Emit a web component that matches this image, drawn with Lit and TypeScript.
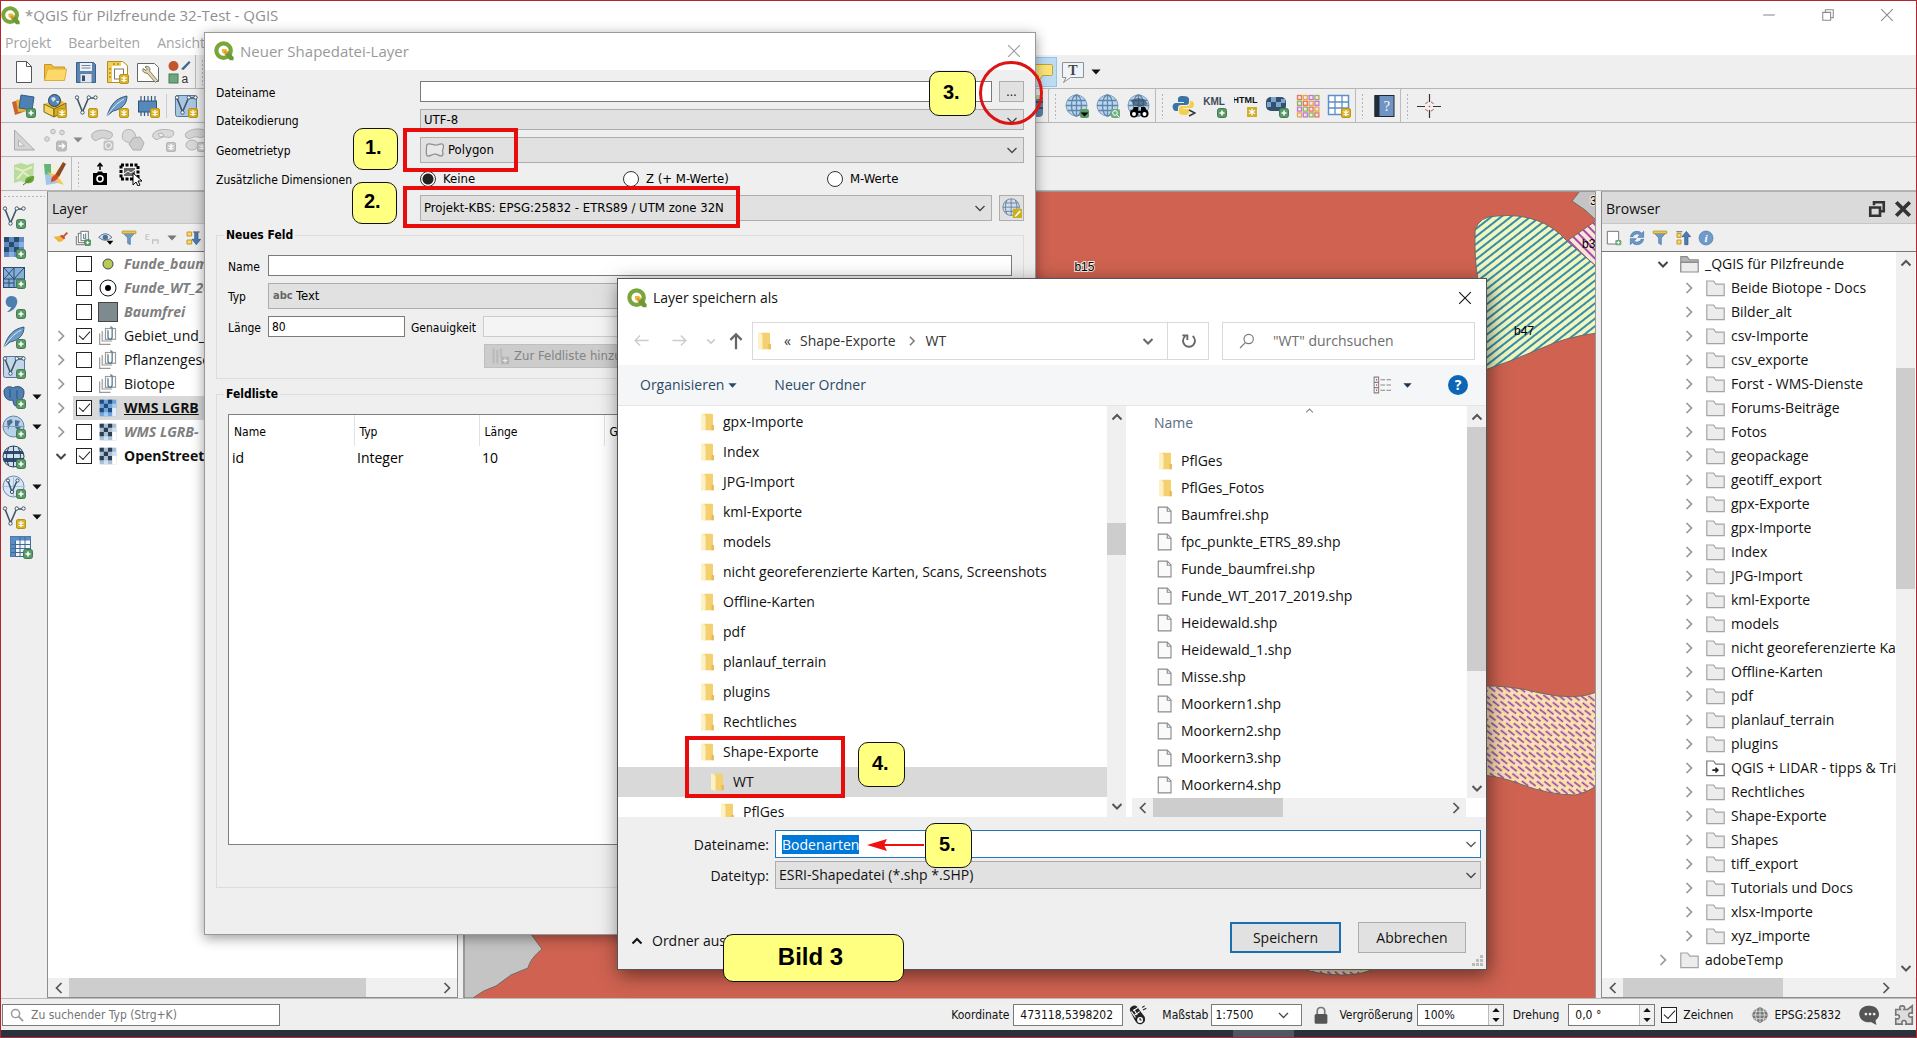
import { LitElement, html, svg, css, nothing, type TemplateResult } from "lit";
import { customElement } from "lit/decorators.js";
import { classMap } from "lit/directives/class-map.js";

/* ---------- icon library ---------- */

const plus = svg`<rect x="14.5" y="14.5" width="9" height="9" rx="2" fill="#5b9a68" stroke="#3f7d4e"/><path d="M19 16.5v5M16.5 19h5" stroke="#fff" stroke-width="1.6"/>`;
const star = svg`<rect x="14.5" y="14.5" width="9" height="9" rx="1.5" fill="#d8b328" stroke="#b99518"/><path d="M19 16v6M16.4 17.5l5.2 3M21.6 17.5l-5.2 3" stroke="#fff" stroke-width="1.3"/>`;
const grayStar = svg`<rect x="14.5" y="14.5" width="9" height="9" rx="1.5" fill="#c6c6c6" stroke="#b5b5b5"/><path d="M19 16v6M16.4 17.5l5.2 3M21.6 17.5l-5.2 3" stroke="#fff" stroke-width="1.3"/>`;
const vee = svg`<path d="M3 4l5.500 14 6-14h6" fill="none" stroke="#3d5566" stroke-width="1.6"/><g fill="#fff" stroke="#3d5566"><circle cx="3" cy="3.500" r="1.700"/><circle cx="8.500" cy="18.500" r="1.700"/><circle cx="14.800" cy="3.500" r="1.700"/><circle cx="21.500" cy="3.500" r="1.700"/></g>`;
const globe = svg`<circle cx="11.500" cy="11.500" r="10.500" fill="#bcd6ee" stroke="#7f9fbd"/><g fill="none" stroke="#5f86ad" stroke-width="1.300"><ellipse cx="11.500" cy="11.500" rx="5" ry="10.500"/><path d="M11.500 1v21M1 11.500h21M2.500 6.500h18M2.500 16.500h18"/></g>`;
const feather = svg`<path d="M2 22C6 10 11 4 22 2c0 7-4 13-14 15z" fill="#6d9cc8" stroke="#35597c"/><path d="M2 22C7 14 12 9 19 5" fill="none" stroke="#dbe8f4"/>`;
const chess = (a: string, b: string, c: string) => svg`<rect x="2" y="2" width="20" height="20" fill="${a}"/><path d="M2 2h5v5h-5zM12 2h5v5h-5zM7 7h5v5h-5zM2 12h5v5h-5zM12 12h5v5h-5z" fill="${b}"/><path d="M17 7h5v5h-5zM7 17h5v5h-5z" fill="${c}"/>`;

const ICONS: Record<string, TemplateResult | unknown> = {
  logo: svg`<circle cx="11.500" cy="11.500" r="8.700" fill="none" stroke="#78a63c" stroke-width="5"/><path d="M12 12h5.500l6 7.500v3.500h-4.500l-7-8z" fill="#6b9a35"/><path d="M9.500 9.500h5l3 3.500-3 2.500-2 .5-3-2.500z" fill="#eeb63a"/><path d="M12.500 12.500l3 3" stroke="#e8772e" stroke-width="1.500"/>`,
  file: svg`<path d="M4.500 1.500h10l5 5v16h-15z" fill="#fff" stroke="#555"/><path d="M14.500 1.500v5h5" fill="none" stroke="#555"/>`,
  open: svg`<path d="M1.500 20V4.500h7l2 2.500h11v13z" fill="#f0bc3e" stroke="#c69324"/><path d="M1.500 20.500l3-11.500h19l-2 11.500z" fill="#ffd968" stroke="#dcae3c"/>`,
  save: svg`<path d="M2.500 2.500h17l2 2v18h-19z" fill="#5b84b1" stroke="#3b5f88"/><rect x="6" y="3" width="12" height="8" fill="#eef2f6"/><path d="M7.500 5.500h9M7.500 8h9" stroke="#6a86a5"/><rect x="6.500" y="14" width="11" height="8.500" fill="#e4e8ec"/><rect x="8" y="15.500" width="3" height="5.500" fill="#35506e"/>`,
  layout: svg`<path d="M2.500 1.500h15l5 4v17h-20z" fill="#fff" stroke="#b48b1e"/><path d="M3 2h13v4h-9v16h-4z" fill="#f1cf58"/><rect x="9.500" y="9" width="9" height="10" fill="#fff" stroke="#777"/><path d="M4 9h2M4 13h2M4 17h2M9 3v2M13 3v2" stroke="#8a6b18"/>${star}`,
  tools: svg`<path d="M1.500 3.500h17l4 4v14h-21z" fill="#fff" stroke="#666"/><path d="M9 7c3-2 6 1 4.500 4l8 9.500-2 2-8.500-9.500c-3 .5-5-2-4-4.500l3 2 1.500-1.500z" fill="#e6d9a0" stroke="#777"/>`,
  style: svg`<circle cx="6.500" cy="6" r="5" fill="#c1562d"/><path d="M14 9l8-8 1.500 1.500-7 7.500z" fill="#41648a"/><rect x="2" y="14" width="9" height="9" fill="#6fa67e" stroke="#477a55"/><text x="14.500" y="22.500" font-size="12" font-family="Liberation Sans" fill="#333">a</text>`,
  dsm: svg`<path d="M0 8l11-3 3 12-11 4z" fill="#c8632e"/><path d="M4 6l12-2 1 13-11 1z" fill="#eab43a"/><path d="M9 1l13 2-2 13-13-2z" fill="#4f80b3" stroke="#345c87"/>${plus}`,
  gpkg: svg`<path d="M1 10l10 5 11-6-6-4z" fill="#e8bb35"/><path d="M1 10l10 5v8l-10-5z" fill="#f4d35e" stroke="#7c6418"/><path d="M11 15l12-6v8l-12 6z" fill="#dba926" stroke="#7c6418"/><circle cx="11.500" cy="6.500" r="6" fill="#5383b4" stroke="#27425f"/><path d="M8 4l3-1 2 2-3 3zM13 7l3 0-1 3z" fill="#d6e5f3"/>${star}`,
  shp: svg`${vee}${star}`,
  vec: svg`${vee}${plus}`,
  spat: svg`${feather}${star}`,
  spatp: svg`${feather}${plus}`,
  mem: svg`<rect x="2.500" y="7" width="18" height="11" fill="#5788bb" stroke="#2f5379"/><path d="M5 2v5M8.500 2v5M12 2v5M15.500 2v5M19 2v5M5 18v4M8.500 18v4M12 18v4" stroke="#365a80" stroke-width="1.200"/>${star}`,
  virt: svg`<rect x="1.500" y="1.500" width="21" height="21" rx="2" fill="#a9c5e2" stroke="#55789c"/>${vee}${star}`,
  virtp: svg`<rect x="1.500" y="1.500" width="21" height="21" rx="2" fill="#c3d7ea" stroke="#55789c"/>${vee}${plus}`,
  ruler: svg`<path d="M2.500 2v20h20z" fill="#d4d4d4" stroke="#a9a9a9"/><path d="M6.500 12v6h6z" fill="#efefef" stroke="#b4b4b4"/>`,
  g1: svg`<g fill="#dcdcdc" stroke="#b5b5b5"><circle cx="4" cy="11" r="2.300"/><circle cx="10" cy="3.500" r="2.300"/><circle cx="19" cy="4.500" r="2.300"/><rect x="13.500" y="13" width="10" height="10" rx="2" fill="#bdbdbd"/></g><path d="M15.500 18h6m-2.500-2.500l2.500 2.500-2.500 2.500" stroke="#fff" stroke-width="1.400" fill="none"/>`,
  g2: svg`<path d="M2 6c5-6 17-4 20-1 2 4-3 8-8 5-4-1-7 4-10 2-2-1-3-4-2-6z" fill="#d4d4d4" stroke="#b2b2b2"/><rect x="13.500" y="12.500" width="10" height="10" rx="2" fill="#c2c2c2"/><circle cx="18.500" cy="17.500" r="3" fill="none" stroke="#fff"/>`,
  g3: svg`<path d="M2 5c1-4 8-5 11-1 2 3 1 5 4 7l-4 6c-4 0-4-3-7-3-4-1-6-5-4-9z" fill="#d9d9d9" stroke="#b2b2b2"/><path d="M12 10l7-1 4 6-3 7-8 0-4-6z" fill="#cdcdcd" stroke="#adadad"/>`,
  g4: svg`<path d="M1 6c4-6 15-5 20-3 3 4-3 8-7 6-5-1-8 4-11 2-2-1-3-3-2-5z" fill="#dadada" stroke="#b2b2b2"/><path d="M6 6l4-1 2 3-4 1z" fill="#efefef" stroke="#b2b2b2"/>${grayStar}`,
  g5: svg`<path d="M3 5c5-5 16-5 20-2 1 4-3 8-8 6-5-1-8 3-11 1-2-1-2-3-1-5z" fill="#d4d4d4" stroke="#b2b2b2"/><ellipse cx="9" cy="17" rx="6" ry="5" fill="#d8d8d8" stroke="#b2b2b2"/>${grayStar}`,
  osm1: svg`<path d="M2 3l7-2 6 2 7-2-1 18-6 3-6-3-7 2z" fill="#b9dc9c"/><path d="M3 6l8 3 9-4M5 17l6-7 8 6" stroke="#e4efc5" stroke-width="2" fill="none"/><path d="M13 20c0-5 4-6 9-6 1 6-4 9-9 6z" fill="#6aa335"/><path d="M11 23l8-6" stroke="#4c7d22"/>`,
  osm2: svg`<path d="M1 2l7 0 6 2-2 8-10 2z" fill="#5fb877"/><path d="M8 1l8 3 5 16-6 3-7-8z" fill="#f6eedc"/><path d="M2 12l9 1 4 8-12 2z" fill="#9ec7e8"/><path d="M4 10l10 3 7 10-6-2z" fill="#f1c85c"/><path d="M20 0l3 2-7 13-4-2z" fill="#8a4a22"/><path d="M8 20c0-5 3-8 6-7 3 2 0 6-6 7z" fill="#d8482a"/>`,
  cam: svg`<path d="M12 8V2M9.500 4.500L12 1.500l2.500 3" stroke="#000" stroke-width="1.500" fill="none"/><path d="M5 11h4l1-1.500h4l1 1.500h4v12h-14z" fill="#000"/><circle cx="12" cy="16.800" r="3.800" fill="#fff"/><circle cx="12" cy="16.800" r="2.200" fill="#000"/>`,
  shot: svg`<rect x="2" y="3" width="17" height="14" fill="none" stroke="#000" stroke-width="3" stroke-dasharray="3 1.500"/><rect x="5" y="6" width="11" height="8" fill="#666"/><path d="M5 12l4-3 3 2 4-3" stroke="#fff" fill="none"/><path d="M14 11v12l3-3 2 4 2-1-2-4h4z" fill="#fff" stroke="#000"/>`,
  note: svg`<path d="M2.500 4.500h19q1 0 1 1v9q0 1-1 1h-9l-4 6v-6h-6z" fill="#fbe57a" stroke="#c2a42e"/>`,
  noteT: svg`<path d="M1.500 2.500h21v15h-13l-7 5 2.500-5h-3.500z" fill="#eef4fa" stroke="#8a9299"/><text x="12" y="14.500" text-anchor="middle" font-size="14" font-weight="700" font-family="Liberation Serif" fill="#444">T</text>`,
  db: svg`<path d="M8 3h15v17q0 2-3 3h-12z" fill="#5d7f9f"/><path d="M8 8h15M8 14h15" stroke="#33506c" stroke-width="2"/><path d="M8 1h14v4h-14z" fill="#b5d69a"/>`,
  gdown: svg`${globe}<rect x="15" y="15" width="9" height="9" rx="2" fill="#5b9a68"/><path d="M15.500 18.500h8l-4 4z" fill="#000"/>`,
  gfind: svg`${globe}<rect x="15" y="15" width="9" height="9" rx="2" fill="#6fae7c"/><circle cx="19" cy="19" r="2.300" fill="none" stroke="#fff"/><path d="M21 21l2 2" stroke="#fff"/>`,
  gbin: svg`${globe}<path d="M4 6l7-2 6 1 4 5-8 3-7-2z" fill="#2f4a63" opacity=".7"/><circle cx="7" cy="19.500" r="4" fill="#000"/><circle cx="17.500" cy="19.500" r="4" fill="#000"/><path d="M7 13h4v4h3v-4h4l3 6h-17z" fill="#000"/><circle cx="7" cy="20" r="2" fill="#fff"/><circle cx="17.500" cy="20" r="2" fill="#fff"/>`,
  python: svg`<path d="M11 2c-5 0-5 2-5 4v2h6v1h-8c-5 0-4 8 0 8h2v-3c0-2 1-3 3-3h5c2 0 3-1 3-3v-3c0-2-2-3-6-3z" fill="#3b74a4"/><path d="M12 21c5 0 5-2 5-4v-2h-6v-1h8c4 0 4-7 0-7h-1v2c0 2-1 3-3 3h-5c-2 0-3 1-3 3v3c0 2 2 3 5 3z" fill="#f3cf4a"/><path d="M17 16l6 3-6 3" fill="none" stroke="#333" stroke-width="1.500"/>`,
  kml: svg`<text x="11" y="11" text-anchor="middle" font-size="10" font-weight="700" font-family="Liberation Sans" fill="#3c4a57">KML</text>${plus}`,
  htm: svg`<text x="11" y="9" text-anchor="middle" font-size="9" font-weight="700" font-family="Liberation Sans" fill="#111">HTML</text><rect x="13" y="13" width="10" height="10" fill="#cfae2a"/><path d="M18 14.500v7M15 16.200l6 3.600M21 16.200l-6 3.600" stroke="#fff" stroke-width="1.300"/>`,
  rast: svg`<rect x="1" y="3" width="20" height="14" rx="5" fill="#33506f"/><path d="M6 3h5v5h-5zM16 5h4v4h-4zM11 8h5v5h-5zM2 8h4v5h-4z" fill="#7fa5cf"/>${plus}`,
  grid1: svg`${[0, 1, 2, 3].map(r => [0, 1, 2, 3].map(c => svg`<rect x="${1.5 + c * 5.8}" y="${1.5 + r * 5.8}" width="4" height="4" fill="#f7e6f2" stroke="${["#e07a5a", "#8fb45c", "#c079c9", "#e0a94a"][(r + c * 3) % 4]}" stroke-width="1.300"/>`))}`,
  grid2: svg`<rect x="1.500" y="1.500" width="20" height="19" fill="#fff" stroke="#5c8fc8" stroke-width="1.500"/><path d="M8 2v18M15 2v18M2 8h19M2 14h19" stroke="#5c8fc8" stroke-width="1.300"/>${star}`,
  book: svg`<rect x="3" y="1.500" width="19" height="21" fill="#6f94c3" stroke="#1c2732"/><rect x="2.500" y="1.500" width="5" height="21" fill="#202c3a"/><text x="14.800" y="17" text-anchor="middle" font-size="14" font-family="Liberation Serif" fill="#fff">?</text>`,
  cross: svg`<path d="M12.500 0v8M12.500 16v8M0 12.500h8M16 12.500h8" stroke="#333" stroke-width="1.200"/><path d="M8.500 10q1-2 2.500-2M16.500 10q-1-2-2.500-2M8.500 15q1 2 2.500 2M16.500 15q-1 2-2.500 2" fill="none" stroke="#c05050"/><circle cx="12.500" cy="12.500" r=".8" fill="#c05050"/>`,
  ras: svg`${chess("#5f8cc4", "#2c4a6c", "#88b0dd")}${plus}`,
  mesh: svg`<rect x="1.500" y="2.500" width="21" height="20" fill="#86aed6" stroke="#2b4d70"/><path d="M12 2v20M2 14h20M2 3l10 11M12 3l-10 11M22 3l-10 11M7 14v8M2 18h10" stroke="#2b4d70" fill="none"/>${plus}`,
  comma: svg`<path d="M9 1c6 0 8 5 5 10-2 4-6 6-9 6 2-2 4-3 4-5-6 1-8-10 0-11z" fill="#4d7eb0"/>${plus}`,
  pg: svg`<path d="M2 6c1-5 7-5 9-3 4-3 11-1 11 4 0 6-3 9-5 8-1 1-1 6-3 6s-3-3-3-6c-3 1-9 0-9-9z" fill="#4f7fb3" stroke="#2d5078"/><path d="M8 4v9M15 5v9" stroke="#2d5078"/>${plus}`,
  wms: svg`<circle cx="11.500" cy="11.500" r="10.500" fill="#b7d3ea" stroke="#64839f"/><path d="M5 6l4-2 2 3-3 3-2 5zM13 5l5 1-2 4 3 2-3 4-3-4z" fill="#4c6f92"/><path d="M1 11.500h21" stroke="#7d9cba"/>${plus}`,
  wcs: svg`<circle cx="11.500" cy="11.500" r="10.500" fill="#cfdfee" stroke="#23405c"/><path d="M2 6h19v3h-19zM1 13h21v4h-20z" fill="#2c4a69"/><path d="M11.500 1v21M6.500 3q-4 8 0 17M16.500 3q4 8 0 17" stroke="#23405c" fill="none"/>${plus}`,
  wfs: svg`<circle cx="11.500" cy="11.500" r="10.500" fill="#d7e6f4" stroke="#6d8cab"/><path d="M1 11.500h21M11.500 1v21" stroke="#a9bfd4"/><path d="M6 6l4 11 5-11" stroke="#33506e" stroke-width="1.500" fill="none"/><g fill="#fff" stroke="#33506e"><circle cx="6" cy="5.500" r="1.600"/><circle cx="10" cy="17" r="1.600"/><circle cx="15.500" cy="5.500" r="1.600"/></g>${plus}`,
  tabl: svg`<rect x="1.500" y="1.500" width="20" height="20" fill="#f2f6fa" stroke="#3f6b97"/><path d="M1.500 1.500h20v4h-20zM1.500 1.500h5v20h-5z" fill="#5b8cc2"/><path d="M11 2v19M16 2v19M2 9.500h19M2 13.500h19M2 17.500h19M6.500 5.500v16" stroke="#3f6b97"/>${plus}`,
  brush: svg`<path d="M16 9l6-6 2 2-6 6z" fill="#b55a2b"/><path d="M2 10l8 8q6 0 9-6l-4-4q-6 2-13 2z" fill="#f0b440"/><path d="M12 9l6 5 2-2-5-5z" fill="#d1432c"/>`,
  grp: svg`<g fill="#fff" stroke="#777" stroke-width="1.500"><path d="M2 9v13h12"/><rect x="5" y="5" width="11" height="14"/><rect x="9" y="2" width="11" height="14"/></g><path d="M13 6v7h3V5" fill="none" stroke="#47778a" stroke-width="1.500"/>${plus}`,
  group: svg`<g fill="#fff" stroke="#9a9a9a" stroke-width="1.400"><path d="M2 9v13h13" fill="none"/><path d="M5 6v12h12" fill="#f5f5f5"/><rect x="9" y="3" width="12" height="13"/></g><path d="M12 5v8q0 3 2.500 3t2.500-3V3q0-2-2.500-2" fill="none" stroke="#5c7f90" stroke-width="1.600"/>`,
  eye: svg`<path d="M1 11q10-11 20 0-10 9-20 0z" fill="#dce6f0" stroke="#5b7590" stroke-width="1.500"/><circle cx="11" cy="11" r="4" fill="#4c6f98"/><path d="M13 16h10l-5 6z" fill="#000"/>`,
  funnel: svg`<path d="M2 3h20l-8 9v10l-4-2v-8z" fill="#6f9bcb" stroke="#4a74a2"/><rect x="1.500" y="1.500" width="21" height="4" rx="1" fill="#e5c65a" stroke="#a58c2c"/>`,
  eps: svg`<text x="1" y="15" font-size="18" font-family="Liberation Serif" fill="#bdbdbd">ε</text><path d="M13 21v-6h8v6" fill="none" stroke="#c4c4c4" stroke-width="2"/>`,
  expand: svg`<path d="M3 3h7v6h-7zM3 15h7v6h-7z" fill="#f5d876" stroke="#c99622" stroke-width="1.500"/><path d="M12 2h10v2h-10z" fill="#777"/><path d="M14.500 4h5v10h4l-6.500 8-6.500-8h4z" fill="#4d7db4" stroke="#2e5787"/>`,
  collapse: svg`<path d="M3 5h6v6h-6zM3 15h6v6h-6z" fill="#f5d876" stroke="#c99622" stroke-width="1.500"/><path d="M2 2.500h9" stroke="#888" stroke-width="2"/><path d="M14.500 22h5V10h4l-6.500-8-6.500 8h4z" fill="#4d7db4" stroke="#2e5787"/>`,
  addl: svg`<path d="M2 2h17v19h-17z" fill="#fff" stroke="#777" stroke-width="1.500"/><rect x="14" y="15" width="9" height="8" rx="2" fill="#6aa878"/><path d="M18.500 16.500v5M16 19h5" stroke="#fff" stroke-width="1.400"/>`,
  refresh: svg`<path d="M2 10q2-8 10-8 5 0 7 3l3-3v9h-9l3-3q-2-3-5-2-4 0-5 4z" fill="#6a97c8" stroke="#4775a8"/><path d="M22 14q-2 8-10 8-5 0-7-3l-3 3v-9h9l-3 3q2 3 5 2 4 0 5-4z" fill="#6a97c8" stroke="#4775a8"/>`,
  info: svg`<circle cx="12" cy="12" r="10.500" fill="#6f9bcb" stroke="#4a74a2"/><text x="12" y="18" text-anchor="middle" font-size="17" font-style="italic" font-weight="700" font-family="Liberation Serif" fill="#fff">i</text>`,
  folder: svg`<path d="M1 21V2.500h8.500l3 4H23V21z" fill="#ececec" stroke="#a3a3a3" stroke-width="1.500"/>`,
  folderOpen: svg`<path d="M1 21V2h8l3 4h11v3H1" fill="#b5b5b5" stroke="#8d8d8d" stroke-width="1.500"/><path d="M1 21.500V9.500h22v12z" fill="#ececec" stroke="#8d8d8d" stroke-width="1.500"/>`,
  folderLink: svg`<path d="M1 21V2.500h8.500l3 4H23V21z" fill="#fff" stroke="#777" stroke-width="1.500"/><path d="M8 14h7m-3-3l3 3-3 3" fill="none" stroke="#222" stroke-width="2"/>`,
  wmsL: svg`${chess("#6fa3dc", "#1f4d7c", "#a8cbee")}<path d="M17 12h5v10h-5z" fill="#e3eefa"/>`,
  osmL: svg`${chess("#a9bfd6", "#2c3e52", "#cfe0ee")}<path d="M17 12h5v10h-5z" fill="#fff"/>`,
  winFolder: svg`<path d="M4 1h6v22h-6z" fill="#fbe9ad"/><path d="M9 1h10q1 0 1 1v14h1v7H9z" fill="#f4d071"/><path d="M4 1l6 3v20l-6-3z" fill="#fdf1c6"/><path d="M18 16h3v7h-3z" fill="#eab94e"/>`,
  winFile: svg`<path d="M3 1.500h12l5 5v16H3z" fill="#fafafa" stroke="#8b8b8b" stroke-width="1.500"/><path d="M15 1.500V7h5" fill="none" stroke="#8b8b8b" stroke-width="1.500"/>`,
  poly: svg`<path d="M2 6c3-4 8 1 12 0s7-3 8 0-1 5-1 7 2 5-1 6-5-3-9-2-8 4-9 1 0-9 0-12z" fill="#e8e8e8" stroke="#8f8f8f" stroke-width="1.500"/>`,
  crs: svg`<circle cx="11" cy="11" r="10" fill="#cfdded" stroke="#707f8d"/><path d="M1 11h20M3 6h16M3 16h16M11 1v20M6 2.500q-4 8 0 17M16 2.500q4 8 0 17" fill="none" stroke="#5f7890"/><rect x="13" y="13" width="11" height="11" rx="1" fill="#cbb01d"/><path d="M15 22l6-7 1.500 1.500-6 6z" fill="#fff"/>`,
  addField: svg`<path d="M2 2v20M7 4v18M12 2v12" stroke="#bbb" stroke-width="3"/><rect x="12" y="13" width="11" height="10" fill="#b5b5b5"/><path d="M17.500 15v6M14.500 18h6" stroke="#eee" stroke-width="1.500"/>`,
  glass: svg`<circle cx="14.500" cy="9" r="7" fill="none" stroke="currentColor" stroke-width="1.700"/><path d="M9.500 14.500L1.500 22.500" stroke="currentColor" stroke-width="1.700"/>`,
  glassL: svg`<circle cx="9.500" cy="9.500" r="7" fill="none" stroke="#999" stroke-width="2.500"/><path d="M14.500 14.500l8 8" stroke="#999" stroke-width="3"/>`,
  left: svg`<path d="M22 12H3m7-7l-7 7 7 7" fill="none" stroke="currentColor" stroke-width="2"/>`,
  right: svg`<path d="M2 12h19m-7-7l7 7-7 7" fill="none" stroke="currentColor" stroke-width="2"/>`,
  up: svg`<path d="M12 23V3m-7.500 7.500L12 3l7.500 7.500" fill="none" stroke="currentColor" stroke-width="3"/>`,
  chevD: svg`<path d="M3 8l9 9 9-9" fill="none" stroke="currentColor" stroke-width="2.500"/>`,
  chevDb: svg`<path d="M3 8l9 9 9-9" fill="none" stroke="currentColor" stroke-width="4"/>`,
  chevUb: svg`<path d="M3 17l9-9 9 9" fill="none" stroke="currentColor" stroke-width="4"/>`,
  chevU: svg`<path d="M3 17l9-9 9 9" fill="none" stroke="currentColor" stroke-width="3"/>`,
  chevR: svg`<path d="M7 2l10 10L7 22" fill="none" stroke="currentColor" stroke-width="3.500"/>`,
  chevL: svg`<path d="M17 2L7 12l10 10" fill="none" stroke="currentColor" stroke-width="3.500"/>`,
  reload: svg`<path d="M17.500 4.500a9 9 0 1 1-11 0" fill="none" stroke="#666" stroke-width="2.800"/><path d="M2 3.500h7.500v7" fill="none" stroke="#666" stroke-width="2.800"/>`,
  x: svg`<path d="M2 2l20 20M22 2L2 22" stroke="currentColor" stroke-width="1.800"/>`,
  xb: svg`<path d="M3 3l18 18M21 3L3 21" stroke="#333" stroke-width="5"/>`,
  min: svg`<path d="M2 12h20" stroke="currentColor" stroke-width="1.800"/>`,
  max: svg`<path d="M3 7.500h13.500V21H3zM7.500 7V3H21v13.500h-4" fill="none" stroke="currentColor" stroke-width="1.800"/>`,
  undock: svg`<path d="M8 7V3h13v12h-4" fill="none" stroke="#333" stroke-width="3.500"/><path d="M3 10h13v11H3z" fill="#dadada" stroke="#333" stroke-width="3.500"/>`,
  tri: svg`<path d="M1 6h22L12 18z" fill="currentColor"/>`,
  view: svg`<path d="M1.500 1.500h6v21h-6zM1.500 8.500h6M1.500 15.500h6" fill="none" stroke="#8a7f7c" stroke-width="1.400"/><path d="M4 5h1.500M4 12h1.500M4 19h1.500" stroke="#b55" stroke-width="2"/><path d="M10 5h6M18 5h6M10 12h6M18 12h6M10 19h6M18 19h6" stroke="#888" stroke-width="1.400"/>`,
  mouse: svg`<path d="M4 2q6-4 9 3l7 9q2 7-4 9-5 1-8-5l-5-10q-2-4 1-6z" fill="#222"/><path d="M7 5l4 7M4 8l5 7M12 3l-6 4M14 8l-6 4" stroke="#fff" stroke-width="1.300"/><circle cx="14.500" cy="18" r="3.500" fill="#fff"/><path d="M14.500 15.500v2.500h2M17 3l3-2M18 6l4-2" stroke="#222" stroke-width="1.300" fill="none"/>`,
  lock: svg`<path d="M7 12V7q0-5 5-5t5 5v5" fill="none" stroke="#777" stroke-width="2.200"/><rect x="3.500" y="10.500" width="17" height="13" rx="2" fill="#555"/>`,
  globeG: svg`<path d="M12 1l8 5 3 6-3 6-8 5-8-5-3-6 3-6z" fill="#777"/><path d="M1 12h22M4 7h16M4 17h16M12 1v22M8 3q-4 9 0 18M16 3q4 9 0 18" fill="none" stroke="#ddd" stroke-width="1.200"/>`,
  bubble: svg`<path d="M12 2a10 9 0 0 1 6 16l1 5-6-3.500a10 9 0 1 1-1-17.500z" fill="#555"/><g fill="#eee"><circle cx="7.500" cy="11" r="1.500"/><circle cx="12" cy="11" r="1.500"/><circle cx="16.500" cy="11" r="1.500"/></g>`,
  puzzle: svg`<path d="M3 6h5q-2-4 2-4t2 4h4l5-4v8q-4-1-4 2t4 2v8h-7q1-4-2-4t-2 4H3v-6q4 1 4-2t-4-2z" fill="#ddd" stroke="#777" stroke-width="1.800"/>`,
};

const ic = (name: string, size = 24, cls = "") =>
  html`<svg class="ic ${cls}" viewBox="0 0 24 24" width=${size} height=${size} aria-hidden="true">${ICONS[name]}</svg>`;

/* ---------- data ---------- */

interface LayerRow { name: string; icon: string; on: boolean; style?: string; arrow?: string; sel?: boolean }
const LAYERS: LayerRow[] = [
  { name: "Funde_baumfrei", icon: "dot", on: false, style: "off" },
  { name: "Funde_WT_2017", icon: "ring", on: false, style: "off" },
  { name: "Baumfrei", icon: "square", on: false, style: "off" },
  { name: "Gebiet_und_Wege", icon: "group", on: true, arrow: "chevR" },
  { name: "Pflanzengesellschaften", icon: "group", on: false, arrow: "chevR" },
  { name: "Biotope", icon: "group", on: false, arrow: "chevR" },
  { name: "WMS LGRB", icon: "wmsL", on: true, arrow: "chevR", style: "cur", sel: true },
  { name: "WMS LGRB-", icon: "osmL", on: false, arrow: "chevR", style: "off" },
  { name: "OpenStreetMap", icon: "osmL", on: true, arrow: "chevDb", style: "bold" },
];

const BROWSER = ["Beide Biotope - Docs", "Bilder_alt", "csv-Importe", "csv_exporte", "Forst - WMS-Dienste", "Forums-Beiträge", "Fotos",
  "geopackage", "geotiff_export", "gpx-Exporte", "gpx-Importe", "Index", "JPG-Import", "kml-Exporte", "models",
  "nicht georeferenzierte Karten", "Offline-Karten", "pdf", "planlauf_terrain", "plugins", "QGIS + LIDAR - tipps & Tricks",
  "Rechtliches", "Shape-Exporte", "Shapes", "tiff_export", "Tutorials und Docs", "xlsx-Importe", "xyz_importe"];

const FOLDERS: [string, number][] = [["gpx-Importe", 0], ["Index", 0], ["JPG-Import", 0], ["kml-Exporte", 0], ["models", 0],
  ["nicht georeferenzierte Karten, Scans, Screenshots", 0], ["Offline-Karten", 0], ["pdf", 0], ["planlauf_terrain", 0],
  ["plugins", 0], ["Rechtliches", 0], ["Shape-Exporte", 0], ["WT", 1], ["PflGes", 2]];

const FILES = ["PflGes", "PflGes_Fotos", "Baumfrei.shp", "fpc_punkte_ETRS_89.shp", "Funde_baumfrei.shp", "Funde_WT_2017_2019.shp",
  "Heidewald.shp", "Heidewald_1.shp", "Misse.shp", "Moorkern1.shp", "Moorkern2.shp", "Moorkern3.shp", "Moorkern4.shp"];

const SIDE: [string, boolean][] = [["vec", false], ["ras", false], ["mesh", false], ["comma", false], ["spatp", false], ["virtp", false],
  ["pg", true], ["wms", true], ["wcs", false], ["wfs", true], ["shp", true], ["tabl", false]];

const base = css`
  * { box-sizing: border-box; }
  button, input, select { font: inherit; color: inherit; margin: 0; border-radius: 0; }
  button { background: none; border: 0; padding: 0; display: flex; align-items: center; justify-content: center; }
  input, select { appearance: none; outline: none; }
  ul { list-style: none; margin: 0; padding: 0; }
  .ic { display: block; flex: none; }
  .sb { display: flex; background: #f0f0f0; color: #555; flex: none; }
  .sb.v { flex-direction: column; width: 19px; }
  .sb.h { height: 19px; }
  .sb button { flex: none; width: 19px; height: 21px; }
  .sb.h button { height: 19px; width: 21px; }
  .thumb { background: #cdcdcd; }
  .combo { position: relative; display: flex; min-width: 0; }
  .combo select { width: 100%; height: 100%; background: #e1e1e1; border: 1px solid #adadad; padding: 0 24px 0 3px; }
  .combo .arrow { position: absolute; right: 6px; top: 0; bottom: 0; margin: auto 0; color: #444; pointer-events: none; }
  .combo .lead { position: absolute; left: 5px; top: 0; bottom: 0; margin: auto 0; pointer-events: none; }
`;

const scrollbar = (dir: "v" | "h", before: number, thumb: number, after: number) => html`
  <div class="sb ${dir}">
    <button aria-label="Zurück">${ic(dir === "v" ? "chevUb" : "chevL", 12)}</button>
    <div style="flex:${before} 1 0"></div><div class="thumb" style="flex:${thumb} 1 0"></div><div style="flex:${after} 1 0"></div>
    <button aria-label="Weiter">${ic(dir === "v" ? "chevDb" : "chevR", 12)}</button>
  </div>`;

const combo = (id: string, value: string, extra: unknown = nothing, cls = "") => html`
  <div class="combo ${cls}"><select id=${id}><option>${value}</option></select>${extra}${ic("chevD", 12, "arrow")}</div>`;

/* ---------- "Neuer Shapedatei-Layer" ---------- */

@customElement("shape-dialog")
export class ShapeDialog extends LitElement {
  static styles = [base, css`
    :host { display: flex; flex-direction: column; box-sizing: border-box; border: 1px solid #999; background: #efefef;
      box-shadow: 0 3px 12px rgba(0,0,0,.4); font: 12px/16px "DejaVu Sans Condensed", "DejaVu Sans", sans-serif; color: #000; }
    header { display: flex; align-items: center; height: 37px; background: #fff; color: #999; padding: 0 14px 2px 9px;
      font: 15px/20px "Open Sans", sans-serif; }
    h2 { font: inherit; margin: 0 auto 0 6px; }
    .body { flex: 1; display: flex; flex-direction: column; padding: 11px 11px 46px; min-height: 0; }
    .form { display: grid; grid-template-columns: 204px 1fr; grid-template-rows: 21px 21px 26px 18px 26px; gap: 7px 0; align-items: center; }
    .form > * { height: 100%; }
    .form > label, .form > span { display: flex; align-items: center; padding-top: 2px; }
    select, .radios { font-size: 13px; }
    .line { display: flex; gap: 7px; min-width: 0; }
    .line > .grow { flex: 1; }
    input[type="text"] { border: 1px solid #7a7a7a; background: #fff; padding: 0 3px; min-width: 0; height: 100%; }
    input[type="text"]:disabled { border-color: #ccc; background: #f4f4f4; }
    .tool { border: 1px solid #adadad; background: #e1e1e1; width: 25px; }
    .radios { display: grid; grid-template-columns: 203px 204px 1fr; }
    .radios label { display: flex; align-items: center; gap: 7px; }
    input[type="radio"] { width: 16px; height: 16px; border: 1px solid #333; border-radius: 50%; background: #fff; flex: none; }
    input[type="radio"]:checked { background: radial-gradient(circle, #222 0 5px, #fff 6px); }
    .poly select { padding-left: 27px; }
    .typ select { padding-left: 27px; }
    .abc { font-weight: 700; color: #666; height: 16px; font-size: 11px; }
    fieldset { border: 1px solid #dcdcdc; margin: 0; padding: 12px 11px 10px; min-width: 0; }
    .fs1 { margin-top: 6px; }
    .fs2 { margin-top: 7px; flex: 1; display: flex; min-height: 0; padding-bottom: 42px; }
    legend { font-weight: 700; padding: 0 2px; margin-left: -4px; height: 16px; }
    .fields { display: grid; grid-template-columns: 40px 1fr; grid-template-rows: 21px 26px 21px 24px; gap: 7px 0; }
    .fields > * { height: 100%; }
    .fields label { display: flex; align-items: center; padding-top: 2px; }
    .len { display: flex; gap: 6px; }
    .len input { width: 137px; }
    .len label { width: 66px; }
    .len .grow { flex: 1; }
    .add { grid-column: 2; justify-self: start; margin-left: 216px; background: #ccc; border: 1px solid #bfbfbf; color: #838383; padding: 0 10px 0 7px; gap: 4px; font-size: 13px; white-space: nowrap; }
    .list { flex: 1; border: 1px solid #7f7f7f; background: #fff; overflow: hidden; }
    table { border-collapse: collapse; table-layout: fixed; width: 100%; }
    th { font-weight: 400; text-align: left; height: 31px; width: 125px; padding: 2px 5px 0; border-right: 1px solid #e2e2e2; }
    th:last-child { width: auto; border: 0; }
    td { height: 24px; padding: 0 3px; font: 14px/20px "Open Sans", sans-serif; }
  `];
  render() {
    return html`
      <header>${ic("logo", 20)}<h2>Neuer Shapedatei-Layer</h2><button aria-label="Schließen">${ic("x", 14)}</button></header>
      <div class="body">
        <div class="form">
          <label for="fn">Dateiname</label>
          <div class="line"><input id="fn" class="grow" type="text"><button class="tool">...</button></div>
          <label for="enc">Dateikodierung</label>${combo("enc", "UTF-8")}
          <label for="geo">Geometrietyp</label>${combo("geo", "Polygon", ic("poly", 20, "lead"), "poly")}
          <span>Zusätzliche Dimensionen</span>
          <div class="radios">
            <label><input type="radio" name="dim" checked>Keine</label>
            <label><input type="radio" name="dim">Z (+ M-Werte)</label>
            <label><input type="radio" name="dim">M-Werte</label>
          </div>
          <span></span>
          <div class="line">${combo("crs", "Projekt-KBS: EPSG:25832 - ETRS89 / UTM zone 32N", nothing, "grow")}<button class="tool" aria-label="KBS wählen">${ic("crs", 20)}</button></div>
        </div>
        <fieldset class="fs1"><legend>Neues Feld</legend>
          <div class="fields">
            <label for="nm">Name</label><input id="nm" type="text">
            <label for="ty">Typ</label>${combo("ty", "Text", html`<span class="lead abc">abc</span>`, "typ")}
            <label for="le">Länge</label>
            <div class="len"><input id="le" type="text" value="80"><label for="pr">Genauigkeit</label><input id="pr" class="grow" type="text" disabled></div>
            <button class="add" disabled>${ic("addField", 18)}Zur Feldliste hinzufügen</button>
          </div>
        </fieldset>
        <fieldset class="fs2"><legend>Feldliste</legend>
          <div class="list"><table>
            <thead><tr><th>Name</th><th>Typ</th><th>Länge</th><th>Genauigkeit</th></tr></thead>
            <tbody><tr><td>id</td><td>Integer</td><td>10</td><td></td></tr></tbody>
          </table></div>
        </fieldset>
      </div>`;
  }
}

/* ---------- "Layer speichern als" ---------- */

@customElement("save-dialog")
export class SaveDialog extends LitElement {
  static styles = [base, css`
    :host { display: flex; flex-direction: column; box-sizing: border-box; border: 1px solid #555; background: #efefef;
      box-shadow: 2px 5px 18px rgba(0,0,0,.5); font: 14px/20px "Open Sans", sans-serif; color: #111; }
    header { display: flex; align-items: center; height: 37px; background: #fff; padding: 0 14px 0 9px; flex: none; }
    h2 { font: inherit; margin: 0 auto 0 6px; }
    nav { display: flex; align-items: center; height: 49px; background: #fff; padding: 0 11px 0 4px; flex: none; color: #ccc; }
    nav > button { width: 38px; height: 38px; }
    nav > .small { width: 25px; color: #666; }
    nav > .faint { color: #ccc; }
    .addr { flex: 1; display: flex; align-items: center; height: 38px; border: 1px solid #d9d9d9; margin: 0 13px 0 4px; color: #333; }
    .addr .ic { margin-left: 2px; }
    .crumbs { display: flex; align-items: center; gap: 9px; margin-left: 11px; flex: 1; }
    .crumbs .ic { color: #777; }
    .addr > button { width: 41px; height: 100%; color: #666; }
    .addr > .re { border-left: 1px solid #d9d9d9; }
    .search { position: relative; width: 253px; height: 38px; color: #777; }
    .search input { width: 100%; height: 100%; border: 1px solid #d9d9d9; padding: 0 8px 0 50px; }
    .search input::placeholder { color: #6d6d6d; opacity: 1; }
    .search .ic { position: absolute; left: 17px; top: 11px; }
    .cmd { display: flex; align-items: center; height: 41px; background: #f5f6f7; border-bottom: 1px solid #e4e5e6; padding: 0 18px 0 22px; color: #2c4a66; flex: none; }
    .cmd button { gap: 4px; }
    .cmd .new { margin: 0 auto 0 37px; }
    .cmd .view { gap: 12px; margin-right: 36px; color: #1d3553; }
    .help { width: 20px; height: 20px; border-radius: 50%; background: #0c66b5; color: #fff; font-weight: 700; font-size: 14px; }
    .panes { display: flex; height: 411px; background: #fff; flex: none; }
    .tree { flex: none; width: 489px; overflow: hidden; padding-top: 1px; }
    .tree li { display: flex; align-items: center; height: 30px; gap: 7px; white-space: nowrap; padding-left: 80px; }
    .tree .d1 { padding-left: 90px; background: #d9d9d9; }
    .tree .d2 { padding-left: 100px; }
    .files { flex: 1; display: flex; flex-direction: column; margin-left: 6px; min-width: 0; }
    .upper { flex: 1; display: flex; min-height: 0; overflow: hidden; }
    .col { flex: 1; min-width: 0; overflow: hidden; }
    .hd { height: 41px; padding: 0 22px 8px; display: flex; align-items: center; position: relative; color: #5b6c80; }
    .hd .ic { position: absolute; left: 173px; top: 0; color: #888; }
    .col li { display: flex; align-items: center; height: 27px; gap: 7px; padding-left: 24px; white-space: nowrap; }
    .lower { display: flex; padding-right: 20px; }
    .lower .sb { flex: 1; }
    .names { display: grid; grid-template-columns: 157px 1fr; grid-template-rows: 28px 28px; gap: 3px 0; padding: 13px 5px 0 0; }
    .names label { text-align: right; padding: 5px 6px 0 0; }
    .name { position: relative; }
    .name input { width: 100%; height: 100%; border: 1px solid #2477b3; background: #fff; padding: 0 6px; }
    .name input::selection { background: #0078d7; color: #fff; }
    .name .ic { position: absolute; right: 4px; top: 8px; color: #555; }
    .names .combo .arrow { right: 4px; }
    .names select { padding-left: 3px; }
    footer { display: flex; align-items: center; gap: 17px; padding: 33px 20px 0 13px; }
    footer .hide { gap: 9px; margin-right: auto; padding-top: 7px; }
    .push { width: 108px; height: 31px; background: #e1e1e1; border: 1px solid #adadad; }
    .push.main { width: 111px; border: 2px solid #1c6fae; }
    .grip { position: absolute; right: 2px; bottom: 2px; }
  `];
  firstUpdated() {
    const field = this.renderRoot.querySelector<HTMLInputElement>("#save-name");
    field?.focus();
    field?.select();
  }
  render() {
    return html`
      <header>${ic("logo", 20)}<h2>Layer speichern als</h2><button aria-label="Schließen">${ic("x", 14)}</button></header>
      <nav>
        <button aria-label="Zurück">${ic("left", 17)}</button><button aria-label="Vorwärts">${ic("right", 17)}</button>
        <button class="small faint" aria-label="Verlauf">${ic("chevDb", 10)}</button><button class="small" aria-label="Nach oben">${ic("up", 18)}</button>
        <div class="addr">${ic("winFolder", 18)}
          <div class="crumbs"><span>«</span><span>Shape-Exporte</span>${ic("chevR", 10)}<span>WT</span></div>
          <button aria-label="Orte">${ic("chevDb", 12)}</button><button class="re" aria-label="Aktualisieren">${ic("reload", 16)}</button>
        </div>
        <div class="search">${ic("glass", 16)}<input type="search" aria-label="Suche" placeholder="&quot;WT&quot; durchsuchen"></div>
      </nav>
      <div class="cmd">
        <button>Organisieren ${ic("tri", 9)}</button><button class="new">Neuer Ordner</button>
        <button class="view" aria-label="Ansicht">${ic("view", 18)}${ic("tri", 9)}</button><button class="help">?</button>
      </div>
      <div class="panes">
        <ul class="tree">${FOLDERS.map(([n, d]) => html`<li class="d${d}">${ic("winFolder", 18)}${n}</li>`)}</ul>
        ${scrollbar("v", 96, 32, 242)}
        <div class="files">
          <div class="upper">
            <div class="col"><div class="hd">Name${ic("chevU", 9)}</div>
              <ul>${FILES.map((n, i) => html`<li>${ic(i < 2 ? "winFolder" : "winFile", 18)}${n}</li>`)}</ul></div>
            ${scrollbar("v", 0, 243, 105)}
          </div>
          <div class="lower">${scrollbar("h", 0, 129, 161)}</div>
        </div>
      </div>
      <div class="names">
        <label for="save-name">Dateiname:</label>
        <div class="name"><input id="save-name" type="text" value="Bodenarten">${ic("chevD", 12)}</div>
        <label for="save-type">Dateityp:</label>${combo("save-type", "ESRI-Shapedatei (*.shp *.SHP)")}
      </div>
      <footer>
        <button class="hide">${ic("chevUb", 12)}Ordner ausblenden</button>
        <button class="push main">Speichern</button><button class="push">Abbrechen</button>
      </footer>
      <svg class="grip" width="12" height="12" viewBox="0 0 12 12"><path d="M8 0h3v3h-3zM4 4h3v3h-3zM8 4h3v3h-3zM0 8h3v3h-3zM4 8h3v3h-3zM8 8h3v3h-3z" fill="#bbb"/></svg>`;
  }
}

/* ---------- main window ---------- */

@customElement("app-root")
export class AppRoot extends LitElement {
  static styles = [base, css`
    :host { display: block; }
    .app { position: relative; height: 100vh; overflow: hidden; display: flex; flex-direction: column; border: 1px solid #b3262e;
      background: #efefef; font: 14px/20px "Open Sans", sans-serif; color: #111; }
    .title { display: flex; align-items: center; height: 28px; background: #fff; color: #8f8f8f; font-size: 15px; flex: none; }
    .title h1 { font: inherit; margin: 0 auto 0 5px; }
    .title button { width: 59px; height: 26px; color: #8a8a8a; }
    .menu { display: flex; gap: 17px; height: 26px; align-items: center; background: #fff; color: #a3a3a3; padding: 2px 0 0 4px; flex: none; }
    .bar { display: flex; align-items: center; height: 34px; padding-left: 7px; border-bottom: 1px solid #b5b5b5; flex: none; }
    .bar button { width: 31px; height: 30px; flex: none; }
    .bar .drop { width: 16px; color: #111; }
    .bar .drop.dim { color: #888; }
    .bar .on { background: #bcdcf4; border: 1px solid #90c4ec; }
    .gend { width: 1px; align-self: stretch; background: #bbb; margin-left: 1px; flex: none; }
    .handle { width: 3px; height: 26px; margin: 0 4px 0 5px; flex: none; background: radial-gradient(circle, #b5b5b5 1px, transparent 1px) 0 0 / 3px 4px; }
    .sep { width: 1px; height: 24px; background: #ccc; margin: 0 3px; flex: none; }
    .gap1 { flex: 0 0 818px; }
    .gap2 { flex: 0 0 815px; }
    .main { flex: 1; display: flex; min-height: 0; }
    .side { width: 46px; flex: none; padding-top: 4px; }
    .side .grab { height: 3px; margin: 0 2px 4px; background: radial-gradient(circle, #b5b5b5 1px, transparent 1px) 0 0 / 4px 3px; }
    .side .r { display: flex; align-items: center; height: 30px; }
    .side .r:last-child { padding-left: 7px; }
    .side .r button:first-child { width: 26px; }
    .side .d { width: 20px; height: 20px; }
    .dock { display: flex; flex-direction: column; flex: none; border: 1px solid #8c8c8c; border-top-color: #b0b0b0; min-height: 0; }
    .layers { width: 411px; margin-right: 5px; }
    .browser { width: 315px; margin-left: 5px; border-right: 0; }
    .dock h2 { display: flex; align-items: center; gap: 8px; height: 32px; margin: 0; padding: 3px 4px 0; background: #dadada; font: inherit; border-bottom: 1px solid #c6c6c6; flex: none; }
    .dock h2 span { margin-right: auto; }
    .tools { display: flex; align-items: center; height: 28px; border-bottom: 1px solid #777; flex: none; }
    .tools button { width: 23px; height: 24px; }
    .tools .d { width: 18px; color: #777; }
    .list { flex: 1; background: #fff; overflow: hidden; min-height: 0; white-space: nowrap; }
    .list li { display: flex; align-items: center; height: 24px; }
    .arrow { width: 25px; display: flex; justify-content: center; color: #999; flex: none; }
    .arrow.open { color: #444; }
    .lb { flex: 1; display: flex; align-items: center; gap: 6px; padding-left: 3px; height: 24px; overflow: hidden; }
    .sel { background: #d9d9d9; }
    input[type="checkbox"] { width: 16px; height: 16px; border: 1px solid #222; background: #fff; display: grid; place-items: center; flex: none; }
    input[type="checkbox"]:checked::after { content: ""; width: 10px; height: 5px; border: solid #222; border-width: 0 0 1px 1px; transform: translateY(-2px) rotate(-48deg); }
    .off { font-weight: 700; font-style: italic; color: #808080; }
    .cur { font-weight: 700; text-decoration: underline; }
    .bold { font-weight: 700; }
    .map { flex: 1; min-width: 0; position: relative; border: solid #999; border-width: 1px 1px 0; }
    .map svg { display: block; width: 100%; height: 100%; }
    .map text { font: 12px "Liberation Sans", sans-serif; }
    .map .halo { paint-order: stroke; stroke: #f4ece4; stroke-width: 2px; }
    .bt { flex: 1; display: flex; min-height: 0; background: #fff; }
    .bt .arrow { width: 16px; margin-right: 9px; }
    .bt li { padding-left: 79px; }
    .bt li.top { padding-left: 53px; }
    .bt li .t { margin-left: 6px; }
    .bt .sb { margin-right: 1px; }
    .hs { display: flex; padding-right: 20px; background: #f0f0f0; }
    .hs .sb { flex: 1; }
    .status { display: flex; align-items: center; height: 32px; padding: 1px 1px 0 1px; flex: none; font: 12px/16px "DejaVu Sans Condensed", "DejaVu Sans", sans-serif; border-top: 1px solid #bbb; }
    .status input[type="text"], .status input[type="search"] { height: 22px; border: 1px solid #7a7a7a; background: #fff; padding: 0 6px; width: 100%; }
    .find { position: relative; width: 278px; margin-right: auto; }
    .find input[type="search"] { padding-left: 28px; }
    .find input::placeholder { color: #757575; opacity: 1; }
    .find .ic { position: absolute; left: 8px; top: 4px; }
    .status label { white-space: nowrap; }
    .coord { width: 110px; margin: 0 5px 0 4px; }
    .mm { margin-left: 14px; }
    .scale { width: 91px; height: 22px; margin: 0 10px 0 3px; }
    .status .scale select { background: #fff; border-color: #7a7a7a; }
    .lk { margin-right: 9px; }
    .spin { position: relative; width: 87px; margin: 0 9px 0 4px; }
    .spin + label + .spin { margin: 0 6px 0 9px; }
    .spin .ud { position: absolute; right: 1px; top: 1px; bottom: 1px; width: 15px; display: flex; flex-direction: column; background: #f0f0f0; border-left: 1px solid #bbb; }
    .spin .ud button { flex: 1; }
    .flip { transform: scaleY(-1); }
    .check { display: flex; align-items: center; gap: 6px; }
    .proj { gap: 5px; margin: 0 18px; }
    .msg { margin-right: 12px; }
    .task { height: 7px; background: #27323c; display: flex; justify-content: center; flex: none; }
    .task i { width: 61px; margin-left: 610px; background: #4e5862; }
    .win { position: absolute; }
    .w1 { left: 203px; top: 31px; width: 832px; height: 903px; }
    .w2 { left: 616px; top: 277px; width: 870px; height: 692px; }
    .num { position: absolute; display: flex; align-items: center; background: #ffff80; border: 1px solid #111; border-radius: 10px; width: 45px; height: 42px; padding: 0 0 4px 11px; font: 700 20px/24px "Liberation Sans", sans-serif; color: #000; }
    .num.big { width: 47px; height: 45px; padding-left: 13px; }
    .n1 { left: 352px; top: 127px; } .n2 { left: 351px; top: 181px; } .n3 { left: 928px; top: 70px; }
    .n4 { left: 857px; top: 741px; } .n5 { left: 924px; top: 822px; }
    .num.cap { left: 722px; top: 933px; width: 181px; height: 48px; justify-content: center; font-size: 24px; padding: 0 6px 2px 0; }
    .red { position: absolute; border: 4px solid #e80c0c; }
    .r1 { left: 402px; top: 127px; width: 115px; height: 44px; }
    .r2 { left: 402px; top: 185px; width: 337px; height: 42px; }
    .r4 { left: 684px; top: 735px; width: 160px; height: 62px; }
    .ring { left: 978px; top: 60px; width: 64px; height: 64px; border-width: 3px; border-radius: 50%; border-color: #dc1414; }
    .pointer { position: absolute; left: 866px; top: 837px; }
  `];

  private glyph(name: string) {
    if (name === "dot") return html`<svg class="ic" width="20" height="20" viewBox="0 0 20 20"><circle cx="10" cy="10" r="5" fill="#b7cc57" stroke="#444"/></svg>`;
    if (name === "ring") return html`<svg class="ic" width="20" height="20" viewBox="0 0 20 20"><circle cx="10" cy="10" r="8" fill="#fff" stroke="#111"/><circle cx="10" cy="10" r="3" fill="#000"/></svg>`;
    if (name === "square") return html`<svg class="ic" width="20" height="20" viewBox="0 0 20 20"><rect x=".5" y=".5" width="19" height="19" fill="#7d8b8f" stroke="#444"/></svg>`;
    return ic(name, 20);
  }

  private btns(...names: string[]) { return names.map(n => html`<button aria-label=${n}>${ic(n)}</button>`); }

  private browserRow(name: string, cls: string, icon: string, arrow: string) {
    return html`<li class=${cls}><span class=${classMap({ arrow: true, open: arrow === "chevDb" })}>${ic(arrow, 12)}</span>${ic(icon, 19)}<span class="t">${name}</span></li>`;
  }

  render() {
    const grp = html`<span class="gend"></span><span class="handle"></span>`;
    return html`<div class="app">
      <div class="title">${ic("logo", 19)}<h1>*QGIS für Pilzfreunde 32-Test - QGIS</h1>
        <button aria-label="Minimieren">${ic("min", 14)}</button><button aria-label="Wiederherstellen">${ic("max", 14)}</button><button aria-label="Schließen">${ic("x", 14)}</button></div>
      <div class="menu"><span>Projekt</span><span>Bearbeiten</span><span>Ansicht</span></div>
      <div class="bar">${this.btns("file", "open", "save", "layout", "tools", "style")}${grp}<span class="gap1"></span>
        <button class="on" aria-label="Notiz">${ic("note")}</button>${this.btns("noteT")}<button class="drop" aria-label="Mehr">${ic("tri", 10)}</button></div>
      <div class="bar">${this.btns("dsm", "gpkg", "shp", "spat", "mem")}<span class="sep"></span>${this.btns("virt")}<span class="gap2"></span>
        ${this.btns("db")}${grp}${this.btns("gdown", "gfind", "gbin")}${grp}${this.btns("python", "kml", "htm", "rast", "grid1", "grid2")}${grp}${this.btns("book")}${grp}${this.btns("cross")}</div>
      <div class="bar">${this.btns("ruler", "g1")}<button class="drop dim" aria-label="Mehr">${ic("tri", 10)}</button>${this.btns("g2", "g3", "g4", "g5")}</div>
      <div class="bar">${this.btns("osm1", "osm2")}${grp}${this.btns("cam", "shot")}</div>
      <div class="main">
        <div class="side"><div class="grab"></div>
          ${SIDE.map(([n, d]) => html`<div class="r">${this.btns(n)}${d ? html`<button class="d" aria-label="Mehr">${ic("tri", 10)}</button>` : nothing}</div>`)}
        </div>
        <section class="dock layers">
          <h2><span>Layer</span></h2>
          <div class="tools">${["brush", "grp", "eye", "funnel", "eps"].map(n => html`<button aria-label=${n}>${ic(n, 16)}</button>`)}<button class="d" aria-label="Mehr">${ic("tri", 10)}</button><button aria-label="Ausklappen">${ic("expand", 16)}</button></div>
          <ul class="list">${LAYERS.map(l => html`<li>
            <span class=${classMap({ arrow: true, open: l.arrow === "chevDb" })}>${l.arrow ? ic(l.arrow, 12) : nothing}</span>
            <label class=${classMap({ lb: true, sel: !!l.sel })}><input type="checkbox" ?checked=${l.on}>${this.glyph(l.icon)}<span class=${l.style ?? ""}>${l.name}</span></label></li>`)}</ul>
          ${scrollbar("h", 0, 297, 70)}
        </section>
        <div class="map">${this.map()}</div>
        <section class="dock browser">
          <h2><span>Browser</span><button aria-label="Abdocken">${ic("undock", 18)}</button><button aria-label="Schließen">${ic("xb", 18)}</button></h2>
          <div class="tools">${["addl", "refresh", "funnel", "collapse", "info"].map(n => html`<button aria-label=${n}>${ic(n, 16)}</button>`)}</div>
          <div class="bt">
            <ul class="list">
              ${this.browserRow("_QGIS für Pilzfreunde", "top", "folderOpen", "chevDb")}
              ${BROWSER.map(n => this.browserRow(n, "", n.startsWith("QGIS +") ? "folderLink" : "folder", "chevR"))}
              ${this.browserRow("adobeTemp", "top", "folder", "chevR")}
            </ul>
            ${scrollbar("v", 95, 220, 367)}
          </div>
          <div class="hs">${scrollbar("h", 0, 159, 92)}</div>
        </section>
      </div>
      <div class="status">
        <div class="find">${ic("glassL", 14)}<input type="search" aria-label="Suche" placeholder="Zu suchender Typ (Strg+K)"></div>
        <label for="co">Koordinate</label><div class="coord"><input id="co" type="text" value="473118,5398202"></div>
        ${ic("mouse", 20)}<label class="mm" for="sc">Maßstab</label>${combo("sc", "1:7500", nothing, "scale")}
        ${ic("lock", 18, "lk")}
        <label for="zo">Vergrößerung</label>${this.spin("zo", "100%")}
        <label for="ro">Drehung</label>${this.spin("ro", "0,0 °")}
        <label class="check"><input type="checkbox" checked>Zeichnen</label>
        <button class="proj">${ic("globeG", 18)}EPSG:25832</button>
        <button class="msg" aria-label="Meldungen">${ic("bubble", 22)}</button><button aria-label="Erweiterungen">${ic("puzzle", 22)}</button>
      </div>
      <div class="task"><i></i></div>

      <shape-dialog class="win w1"></shape-dialog>
      <save-dialog class="win w2"></save-dialog>

      <div class="red r1"></div><div class="red r2"></div><div class="red r4"></div><div class="red ring"></div>
      <div class="num n1">1.</div><div class="num n2">2.</div><div class="num big n3">3.</div><div class="num big n4">4.</div><div class="num big n5">5.</div>
      <div class="num cap">Bild 3</div>
      <svg class="pointer" width="58" height="14" viewBox="0 0 58 14"><path d="M14 7h43" stroke="#f01010" stroke-width="2"/><path d="M0 7l20-6-3 6 3 6z" fill="#f01010"/></svg>
    </div>`;
  }

  private spin(id: string, value: string) {
    return html`<div class="spin"><input id=${id} type="text" value=${value}><div class="ud">
      <button aria-label="Mehr">${ic("tri", 8, "flip")}</button><button aria-label="Weniger">${ic("tri", 8)}</button></div></div>`;
  }

  private map() {
    return html`<svg viewBox="463 192 1132 806" preserveAspectRatio="none" role="img" aria-label="Karte">
      <defs>
        <pattern id="hg" width="8" height="6" patternUnits="userSpaceOnUse" patternTransform="rotate(-38)"><rect width="8" height="6" fill="#f0f6bf"/><path d="M0 3h8" stroke="#2e86a6" stroke-width="1.900"/></pattern>
        <pattern id="hp" width="12" height="9" patternUnits="userSpaceOnUse" patternTransform="rotate(38)"><rect width="12" height="9" fill="#fbe3a8"/><rect width="12" height="3" fill="#f9dccb"/><path d="M0 2.500h8M6 7h6M0 7h2" stroke="#8f3a9c" stroke-width="1.500"/></pattern>
        <pattern id="hq" width="8" height="6" patternUnits="userSpaceOnUse" patternTransform="rotate(45)"><rect width="8" height="6" fill="#fae6d6"/><path d="M0 3h8" stroke="#9a2aa5" stroke-width="1.700"/></pattern>
      </defs>
      <rect x="463" y="192" width="1133" height="807" fill="#cf6250"/>
      <g stroke="#6f6a66">
        <path d="M1580 191h17v30l-12-11-13-9z" fill="#c4c4c4"/>
        <path d="M1567 241l30-21v47z" fill="url(#hq)"/>
        <path d="M1475 230q4-14 22-14 44-4 70 25l30 26v66q-32 4-55 15-30 13-60 23l-4-90q-4-22-3-51z" fill="url(#hg)"/>
        <path d="M1480 686q30-1 60 7 36 8 57-1v93q-8 7-22 10-26 0-55-11-20-8-40-9z" fill="url(#hp)"/>
        <path d="M1300 968h75q-12 7-34 7t-41-7z" fill="url(#hp)"/>
        <path d="M463 930h64l14 19q-12 10-14 19l-17 7-15 11q-13 4-23 12h-9z" fill="#c4c4c4"/>
      </g>
      <text class="halo" x="1074" y="271">b15</text><text x="1514" y="335">b47</text><text x="1582" y="248">b3</text><text class="halo" x="1590" y="205">3</text>
    </svg>`;
  }
}
